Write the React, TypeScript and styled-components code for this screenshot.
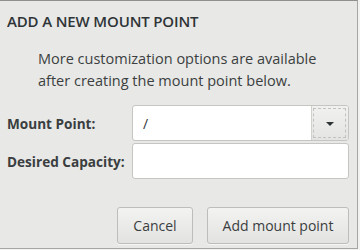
import styled, { createGlobalStyle } from 'styled-components';

const GlobalStyle = createGlobalStyle`
  html, body {
    margin: 0;
    padding: 0;
    background: #f2f2f1;
  }
  body {
    font-family: "Open Sans", "DejaVu Sans", sans-serif;
    color: #2e3436;
  }
`;

const Dialog = styled.div`
  box-sizing: border-box;
  width: 358px;
  height: 249px;
  background: #e8e8e7;
  border-top: 1px solid #8f8f8d;
  border-right: 1px solid #a6a6a4;
  border-bottom: 1px solid #a6a6a4;
  padding: 10px 8px 0 7px;
  display: flex;
  flex-direction: column;
`;

const Title = styled.div`
  font-size: 15px;
  font-weight: 600;
  letter-spacing: -0.15px;
  line-height: 20px;
`;

const Hint = styled.p`
  margin: 17px 0 0 31px;
  font-size: 14.5px;
  line-height: 22px;
  color: #3b3f40;
`;

const Form = styled.div`
  display: grid;
  grid-template-columns: 125px 217px;
  row-gap: 2px;
  margin-top: 13px;
  align-items: center;
`;

const Label = styled.label`
  font-size: 13.6px;
  font-weight: 700;
  color: #3a3e3f;
  white-space: nowrap;
`;

const Field = styled.div`
  box-sizing: border-box;
  height: 36px;
  display: flex;
  background: #ffffff;
  border: 1px solid #c5c5c2;
  border-radius: 3px;
  overflow: hidden;
`;

const Input = styled.input`
  flex: 1;
  min-width: 0;
  border: none;
  outline: none;
  background: transparent;
  padding: 0 10px;
  font-family: "Open Sans", "DejaVu Sans", sans-serif;
  font-size: 14px;
  color: #2e3436;
`;

const DropButton = styled.div`
  width: 36px;
  display: flex;
  align-items: center;
  justify-content: center;
  background: linear-gradient(#f1f1f0, #e4e4e2);
  border-left: 1px solid #d0d0cd;
  outline: 1px dashed #c2c2bf;
  outline-offset: -3px;
`;

const Arrow = styled.div`
  width: 0;
  height: 0;
  border-left: 4.5px solid transparent;
  border-right: 4.5px solid transparent;
  border-top: 4.5px solid #2e3436;
  margin-top: 2px;
`;

const Actions = styled.div`
  display: flex;
  justify-content: flex-end;
  gap: 14px;
  margin-top: 28px;
`;

const Button = styled.button<{ $width: number }>`
  box-sizing: border-box;
  width: ${(p) => p.$width}px;
  height: 37px;
  border: 1px solid #bdbdba;
  border-radius: 3px;
  background: linear-gradient(#f3f3f2, #e2e2e0);
  box-shadow: 0 1px 0 rgba(255, 255, 255, 0.6);
  font-family: "Open Sans", "DejaVu Sans", sans-serif;
  font-size: 14px;
  color: #3a3e3f;
  padding: 0;
`;

const App = () => {
  return (
    <>
      <GlobalStyle />
      <Dialog>
        <Title>ADD A NEW MOUNT POINT</Title>
        <Hint>
          More customization options are available
          <br />
          after creating the mount point below.
        </Hint>
        <Form>
          <Label>Mount Point:</Label>
          <Field>
            <Input defaultValue="/" />
            <DropButton>
              <Arrow />
            </DropButton>
          </Field>
          <Label>Desired Capacity:</Label>
          <Field>
            <Input />
          </Field>
        </Form>
        <Actions>
          <Button $width={76}>Cancel</Button>
          <Button $width={142}>Add mount point</Button>
        </Actions>
      </Dialog>
    </>
  );
};

export default App;
